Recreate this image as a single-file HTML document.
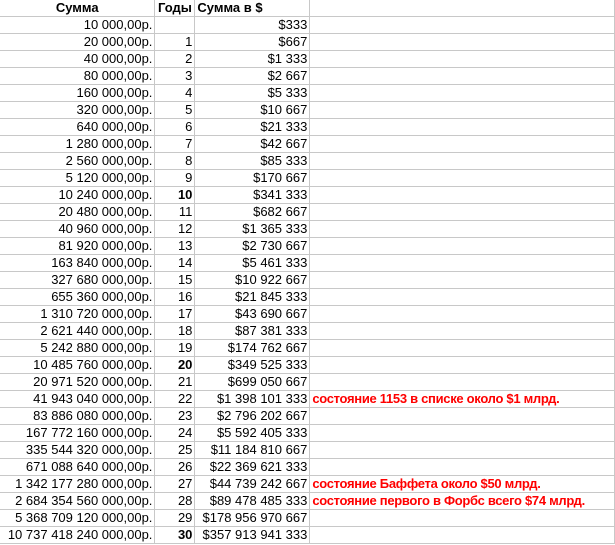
<!DOCTYPE html>
<html><head><meta charset="utf-8"><style>
body{margin:0;background:#fff;width:615px;height:545px;overflow:hidden}
table{border-collapse:collapse;table-layout:fixed;font-family:"Liberation Sans",Arial,sans-serif;font-size:13px;color:#000}
td{height:16px;padding:0 2px;border-right:1px solid #c8c8c8;border-bottom:1px solid #c8c8c8;white-space:nowrap;overflow:visible;line-height:16px}
td.a,td.b,td.c{text-align:right}
tr.h td{font-weight:bold}
tr.h td.a,tr.h td.b{text-align:center}
tr.h td.c{text-align:left}
.bo{font-weight:bold}
td.d{color:#ff0000;font-weight:bold;text-align:left;letter-spacing:-0.3px}
</style></head><body>
<table>
<colgroup><col style="width:155px"><col style="width:40px"><col style="width:115px"><col style="width:305px"></colgroup>
<tr class="h"><td class="a">Сумма</td><td class="b">Годы</td><td class="c">Сумма в $</td><td></td></tr>
<tr><td class="a">10 000,00р.</td><td class="b"></td><td class="c">$333</td><td></td></tr>
<tr><td class="a">20 000,00р.</td><td class="b">1</td><td class="c">$667</td><td></td></tr>
<tr><td class="a">40 000,00р.</td><td class="b">2</td><td class="c">$1 333</td><td></td></tr>
<tr><td class="a">80 000,00р.</td><td class="b">3</td><td class="c">$2 667</td><td></td></tr>
<tr><td class="a">160 000,00р.</td><td class="b">4</td><td class="c">$5 333</td><td></td></tr>
<tr><td class="a">320 000,00р.</td><td class="b">5</td><td class="c">$10 667</td><td></td></tr>
<tr><td class="a">640 000,00р.</td><td class="b">6</td><td class="c">$21 333</td><td></td></tr>
<tr><td class="a">1 280 000,00р.</td><td class="b">7</td><td class="c">$42 667</td><td></td></tr>
<tr><td class="a">2 560 000,00р.</td><td class="b">8</td><td class="c">$85 333</td><td></td></tr>
<tr><td class="a">5 120 000,00р.</td><td class="b">9</td><td class="c">$170 667</td><td></td></tr>
<tr><td class="a">10 240 000,00р.</td><td class="b bo">10</td><td class="c">$341 333</td><td></td></tr>
<tr><td class="a">20 480 000,00р.</td><td class="b">11</td><td class="c">$682 667</td><td></td></tr>
<tr><td class="a">40 960 000,00р.</td><td class="b">12</td><td class="c">$1 365 333</td><td></td></tr>
<tr><td class="a">81 920 000,00р.</td><td class="b">13</td><td class="c">$2 730 667</td><td></td></tr>
<tr><td class="a">163 840 000,00р.</td><td class="b">14</td><td class="c">$5 461 333</td><td></td></tr>
<tr><td class="a">327 680 000,00р.</td><td class="b">15</td><td class="c">$10 922 667</td><td></td></tr>
<tr><td class="a">655 360 000,00р.</td><td class="b">16</td><td class="c">$21 845 333</td><td></td></tr>
<tr><td class="a">1 310 720 000,00р.</td><td class="b">17</td><td class="c">$43 690 667</td><td></td></tr>
<tr><td class="a">2 621 440 000,00р.</td><td class="b">18</td><td class="c">$87 381 333</td><td></td></tr>
<tr><td class="a">5 242 880 000,00р.</td><td class="b">19</td><td class="c">$174 762 667</td><td></td></tr>
<tr><td class="a">10 485 760 000,00р.</td><td class="b bo">20</td><td class="c">$349 525 333</td><td></td></tr>
<tr><td class="a">20 971 520 000,00р.</td><td class="b">21</td><td class="c">$699 050 667</td><td></td></tr>
<tr><td class="a">41 943 040 000,00р.</td><td class="b">22</td><td class="c">$1 398 101 333</td><td class="d">состояние 1153 в списке около $1 млрд.</td></tr>
<tr><td class="a">83 886 080 000,00р.</td><td class="b">23</td><td class="c">$2 796 202 667</td><td></td></tr>
<tr><td class="a">167 772 160 000,00р.</td><td class="b">24</td><td class="c">$5 592 405 333</td><td></td></tr>
<tr><td class="a">335 544 320 000,00р.</td><td class="b">25</td><td class="c">$11 184 810 667</td><td></td></tr>
<tr><td class="a">671 088 640 000,00р.</td><td class="b">26</td><td class="c">$22 369 621 333</td><td></td></tr>
<tr><td class="a">1 342 177 280 000,00р.</td><td class="b">27</td><td class="c">$44 739 242 667</td><td class="d">состояние Баффета около $50 млрд.</td></tr>
<tr><td class="a">2 684 354 560 000,00р.</td><td class="b">28</td><td class="c">$89 478 485 333</td><td class="d">состояние первого в Форбс всего $74 млрд.</td></tr>
<tr><td class="a">5 368 709 120 000,00р.</td><td class="b">29</td><td class="c">$178 956 970 667</td><td></td></tr>
<tr><td class="a">10 737 418 240 000,00р.</td><td class="b bo">30</td><td class="c">$357 913 941 333</td><td></td></tr>
</table>
</body></html>
